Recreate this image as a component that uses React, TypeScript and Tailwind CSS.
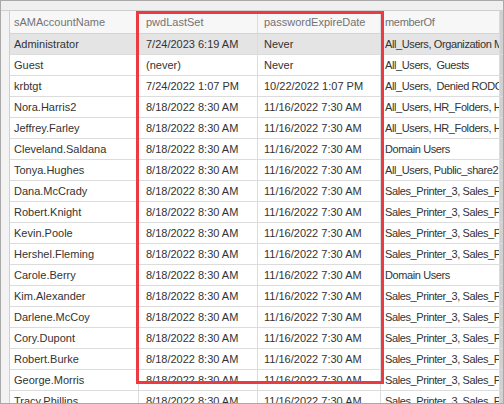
const rows: [string, string, string, string][] = [
  ["Administrator", "7/24/2023 6:19 AM", "Never", "All_Users, Organization Management"],
  ["Guest", "(never)", "Never", "All_Users,  Guests"],
  ["krbtgt", "7/24/2022 1:07 PM", "10/22/2022 1:07 PM", "All_Users,  Denied RODC Password"],
  ["Nora.Harris2", "8/18/2022 8:30 AM", "11/16/2022 7:30 AM", "All_Users, HR_Folders, HR"],
  ["Jeffrey.Farley", "8/18/2022 8:30 AM", "11/16/2022 7:30 AM", "All_Users, HR_Folders, HR"],
  ["Cleveland.Saldana", "8/18/2022 8:30 AM", "11/16/2022 7:30 AM", "Domain Users"],
  ["Tonya.Hughes", "8/18/2022 8:30 AM", "11/16/2022 7:30 AM", "All_Users, Public_share2"],
  ["Dana.McCrady", "8/18/2022 8:30 AM", "11/16/2022 7:30 AM", "Sales_Printer_3, Sales_Printer"],
  ["Robert.Knight", "8/18/2022 8:30 AM", "11/16/2022 7:30 AM", "Sales_Printer_3, Sales_Printer"],
  ["Kevin.Poole", "8/18/2022 8:30 AM", "11/16/2022 7:30 AM", "Sales_Printer_3, Sales_Printer"],
  ["Hershel.Fleming", "8/18/2022 8:30 AM", "11/16/2022 7:30 AM", "Sales_Printer_3, Sales_Printer"],
  ["Carole.Berry", "8/18/2022 8:30 AM", "11/16/2022 7:30 AM", "Domain Users"],
  ["Kim.Alexander", "8/18/2022 8:30 AM", "11/16/2022 7:30 AM", "Sales_Printer_3, Sales_Printer"],
  ["Darlene.McCoy", "8/18/2022 8:30 AM", "11/16/2022 7:30 AM", "Sales_Printer_3, Sales_Printer"],
  ["Cory.Dupont", "8/18/2022 8:30 AM", "11/16/2022 7:30 AM", "Sales_Printer_3, Sales_Printer"],
  ["Robert.Burke", "8/18/2022 8:30 AM", "11/16/2022 7:30 AM", "Sales_Printer_3, Sales_Printer"],
  ["George.Morris", "8/18/2022 8:30 AM", "11/16/2022 7:30 AM", "Sales_Printer_3, Sales_Printer"],
  ["Tracy.Phillips", "8/18/2022 8:30 AM", "11/16/2022 7:30 AM", "Sales_Printer_3, Sales_Printer"],
];

const cell = "flex items-center whitespace-pre overflow-hidden border-r border-[#dcdcdc]";

export default function App() {
  return (
    <div
      className="relative w-[504px] h-[404px] overflow-hidden bg-white border border-[#a9a9a9] text-[11px] text-[#333333]"
      style={{ fontFamily: '"Liberation Sans", Arial, sans-serif' }}
    >
      {/* top strip */}
      <div className="h-[10px] bg-[#efefef] border-b border-[#cfcfcf]" />

      <div className="flex">
        {/* row indicator column */}
        <div className="w-[9px] shrink-0 bg-[#f3f3f3] border-r border-[#cfcfcf] h-[400px]" />

        <div className="flex-1 min-w-0">
          {/* header */}
          <div className="flex h-[23px] bg-[#f7f7f7] border-b border-[#d4d4d4] text-[#737373]">
            <div className={`${cell} w-[129px] pl-[4px]`}>sAMAccountName</div>
            <div className={`${cell} w-[119px] pl-[7px]`}>pwdLastSet</div>
            <div className={`${cell} w-[123px] pl-[6px]`}>passwordExpireDate</div>
            <div className={`${cell} flex-1 pl-[4px] tracking-[-0.3px]`}>memberOf</div>
            <div className="w-[3px] bg-[#d0d0d0]" />
          </div>

          {rows.map((r, i) => (
            <div
              key={r[0]}
              className={`flex h-[21px] border-b border-[#dcdcdc] ${i === 0 ? "bg-[#e4e4e4]" : "bg-white"}`}
            >
              <div className={`${cell} w-[129px] pl-[4px]`}>{r[0]}</div>
              <div className={`${cell} w-[119px] pl-[7px]`}>{r[1]}</div>
              <div className={`${cell} w-[123px] pl-[6px]`}>{r[2]}</div>
              <div className={`${cell} flex-1 pl-[4px] tracking-[-0.4px]`}>{r[3]}</div>
              <div className="w-[3px] bg-[#d0d0d0]" />
            </div>
          ))}
        </div>
      </div>

      {/* red highlight box */}
      <div className="absolute left-[135px] top-[10px] w-[248px] h-[373px] border-[3px] border-[#ec3b40] pointer-events-none" />
    </div>
  );
}
